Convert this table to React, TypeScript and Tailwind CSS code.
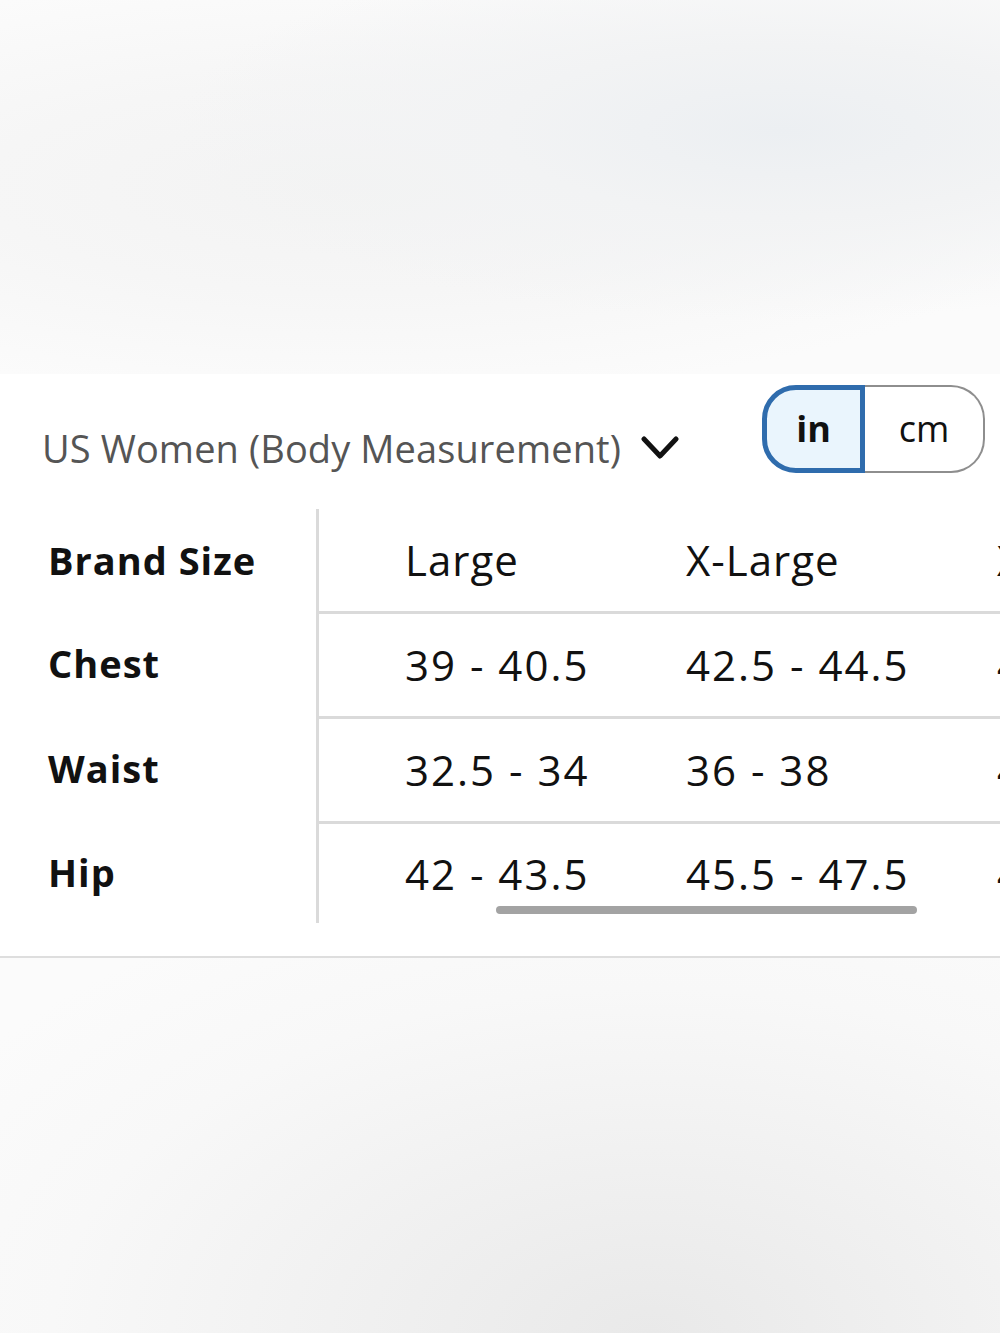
type TRow = {
  label: string;
  values: Array<string>;
  height: string;
};

const rows: Array<TRow> = [
  { label: "Brand Size", values: ["Large", "X-Large", "XX-Large"], height: "h-[102px]" },
  { label: "Chest", values: ["39 - 40.5", "42.5 - 44.5", "46.5 - 48.5"], height: "h-[105px]" },
  { label: "Waist", values: ["32.5 - 34", "36 - 38", "40 - 42"], height: "h-[105px]" },
  { label: "Hip", values: ["42 - 43.5", "45.5 - 47.5", "49.5 - 51.5"], height: "h-[102px]" },
];

const colWidths = ["w-[281px]", "w-[311px]", "w-[281px]"];

function Chevron() {
  return (
    <svg width="38" height="26" viewBox="0 0 38 26" fill="none" className="text-[#111]">
      <polyline points="3,4 19,21 35,4" stroke="currentColor" strokeWidth="5" strokeLinecap="round" strokeLinejoin="round" />
    </svg>
  );
}

export default function App() {
  return (
    <main className="w-[1000px] h-[1333px] flex flex-col font-['Open_Sans',sans-serif] overflow-hidden">
      <div className="h-[374px] bg-[radial-gradient(ellipse_at_78%_35%,#eceff2_0%,#f2f3f4_25%,transparent_55%),radial-gradient(ellipse_at_35%_50%,#f3f3f3_0%,#f6f6f6_40%,#fbfbfb_80%)]" />

      <section className="bg-white h-[584px] border-b-2 border-[#dedede] flex flex-col">
        <div className="flex items-start justify-between pl-[42px] pr-[15px] pt-[11px]">
          <div className="flex items-center gap-[20px] pt-[44px]">
            <span className="text-[38px] leading-none text-[#555] tracking-[0.1px]">US Women (Body Measurement)</span>
            <Chevron />
          </div>
          <div className="flex h-[88px]">
            <button className="w-[103px] rounded-l-[34px] border-[5px] border-[#2f6cad] bg-[#eaf5fd] text-[36px] font-bold text-[#111] leading-none">
              in
            </button>
            <button className="w-[120px] rounded-r-[34px] border-2 border-l-0 border-[#8e8e8e] text-[36px] text-[#111] leading-none">
              cm
            </button>
          </div>
        </div>

        <div className="relative mt-[36px] flex">
          <div className="w-[316px] shrink-0 flex flex-col">
            {rows.map(row => (
              <div key={row.label} className={`${row.height} flex items-center pl-[48px] text-[38px] font-bold text-[#111] tracking-[1px]`}>
                {row.label}
              </div>
            ))}
          </div>
          <div className="flex-1 border-l-[3px] border-[#dadada] overflow-hidden">
            {rows.map((row, i) => (
              <div
                key={row.label}
                className={`${row.height} flex items-center pl-[86px] whitespace-nowrap ${i > 0 ? "border-t-[3px] border-[#dadada]" : ""}`}
              >
                {row.values.map((v, j) => (
                  <span
                    key={v}
                    className={`${colWidths[j]} shrink-0 text-[42px] text-[#111] leading-none ${i === 0 ? "tracking-[1px]" : "tracking-[2px]"}`}
                  >
                    {v}
                  </span>
                ))}
              </div>
            ))}
          </div>
          <div className="absolute left-[496px] top-[397px] w-[421px] h-[8px] rounded-full bg-[#a3a3a3]" />
        </div>
      </section>

      <div className="flex-1 bg-[radial-gradient(ellipse_at_65%_100%,#e9e9e9_0%,#f1f1f1_35%,#f8f8f8_65%,#fbfbfb_90%)]" />
    </main>
  );
}
